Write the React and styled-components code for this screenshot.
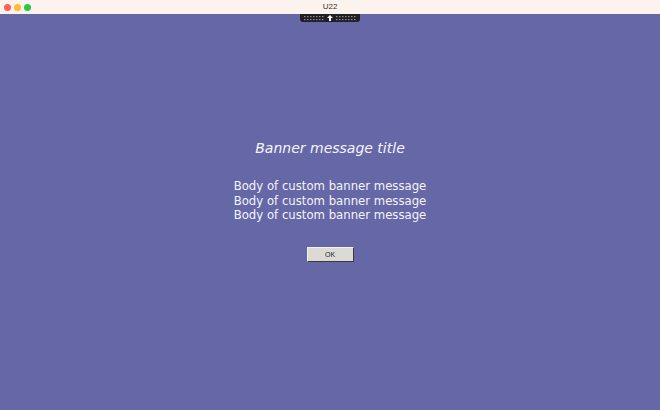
import React from 'react';
import styled, { createGlobalStyle } from 'styled-components';

const GlobalStyle = createGlobalStyle`
  html, body {
    margin: 0;
    padding: 0;
    width: 660px;
    height: 410px;
    overflow: hidden;
    background: #6667a6;
    font-family: "DejaVu Sans", sans-serif;
  }
`;

const Window = styled.div`
  width: 660px;
  height: 410px;
  display: flex;
  flex-direction: column;
  background: #6667a6;
`;

const TitleBar = styled.div`
  height: 14px;
  flex-shrink: 0;
  background: #fcf3ef;
  display: flex;
  align-items: center;
  position: relative;
  padding-left: 4px;
  gap: 3px;
`;

const Light = styled.span`
  width: 7px;
  height: 7px;
  border-radius: 50%;
  background: ${(p) => p.color};
`;

const TitleText = styled.div`
  position: absolute;
  left: 0;
  right: 0;
  top: 0;
  height: 14px;
  line-height: 14px;
  text-align: center;
  font-family: "Liberation Sans", sans-serif;
  font-size: 8px;
  color: #333;
`;

const Content = styled.div`
  flex: 1;
  position: relative;
  display: flex;
  flex-direction: column;
  align-items: center;
  padding-top: 125px;
  color: #f4f4fa;
`;

const Handle = styled.div`
  position: absolute;
  top: 0;
  left: 300px;
  width: 60px;
  height: 8px;
  background: #1f1f24;
  border-radius: 0 0 3px 3px;
  display: flex;
  align-items: center;
  justify-content: center;
  gap: 3px;
`;

const Title = styled.div`
  font-style: italic;
  font-size: 14px;
  line-height: 18px;
  margin-bottom: 22px;
`;

const Body = styled.div`
  font-size: 11.7px;
  line-height: 14.5px;
  text-align: center;
`;

const Button = styled.button`
  margin-top: 24px;
  width: 47px;
  height: 15px;
  padding: 0;
  background: #dcdad4;
  border: 1px solid #f2f1ee;
  border-right-color: #3a3a3a;
  border-bottom-color: #3a3a3a;
  font-family: "Liberation Sans", sans-serif;
  font-size: 7px;
  color: #222;
`;

const Dots = () => (
  <svg width="20" height="5" viewBox="0 0 20 5">
    {[0, 1].map((r) =>
      [0, 1, 2, 3, 4, 5, 6].map((c) => (
        <rect key={`${r}-${c}`} x={c * 3} y={r * 3} width="1.5" height="1.2" fill="#8a8a90" />
      ))
    )}
  </svg>
);

export default function App() {
  return (
    <>
      <GlobalStyle />
      <Window>
        <TitleBar>
          <Light color="#fe5f57" />
          <Light color="#febc2e" />
          <Light color="#28c840" />
          <TitleText>U22</TitleText>
        </TitleBar>
        <Content>
          <Handle>
            <Dots />
            <svg width="6" height="6" viewBox="0 0 6 6">
              <path d="M3 0 L6 3 L4 3 L4 6 L2 6 L2 3 L0 3 Z" fill="#fff" />
            </svg>
            <Dots />
          </Handle>
          <Title>Banner message title</Title>
          <Body>
            Body of custom banner message
            <br />
            Body of custom banner message
            <br />
            Body of custom banner message
          </Body>
          <Button>OK</Button>
        </Content>
      </Window>
    </>
  );
}
